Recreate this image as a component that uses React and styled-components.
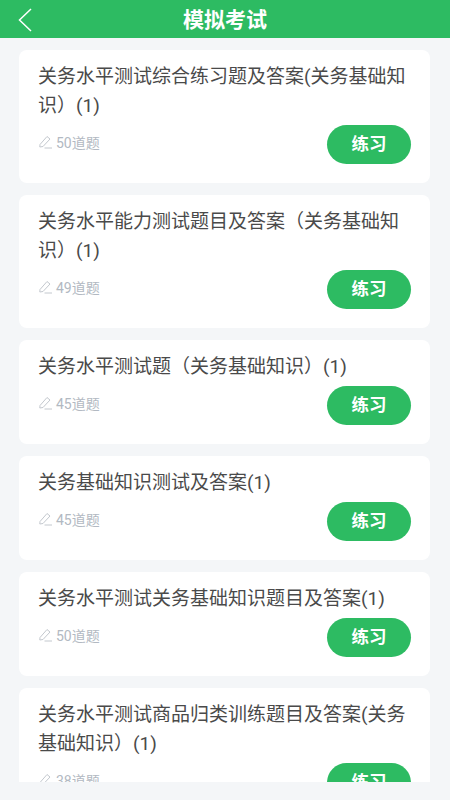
import React from 'react';
import styled, { createGlobalStyle } from 'styled-components';

const GlobalStyle = createGlobalStyle`
  html, body {
    margin: 0;
    padding: 0;
    background: #f4f6f8;
  }
  * {
    box-sizing: border-box;
  }
`;

const Page = styled.div`
  width: 450px;
  height: 800px;
  display: flex;
  flex-direction: column;
  overflow: hidden;
  background: #f4f6f8;
  font-family: "Roboto", "Noto Sans CJK SC", sans-serif;
`;

const Header = styled.header`
  height: 38px;
  flex: none;
  display: flex;
  align-items: center;
  justify-content: center;
  position: relative;
  padding-bottom: 2px;
  background: #2dbb62;
`;

const BackButton = styled.button`
  position: absolute;
  left: 17px;
  top: 8px;
  padding: 0;
  border: 0;
  background: none;
  display: flex;
`;

const HeaderTitle = styled.h1`
  margin: 0;
  color: #fff;
  font-size: 21px;
  font-weight: 700;
`;

const List = styled.div`
  height: 744px;
  flex: none;
  overflow: hidden;
  padding: 12px 20px 0 19px;
  display: flex;
  flex-direction: column;
  gap: 12px;
`;

const Card = styled.div`
  flex: none;
  padding: 12px 19px 19px 20px;
  border-radius: 8px;
  background: #fff;
`;

const Title = styled.div`
  margin-left: -1px;
  color: #4a4a4a;
  font-size: 19px;
  line-height: 29px;
`;

const Footer = styled.div`
  margin-top: 5px;
  display: flex;
  align-items: center;
  justify-content: space-between;
`;

const Count = styled.div`
  margin-bottom: 5px;
  display: flex;
  align-items: center;
  gap: 4px;
  color: #b2b9c2;
  font-size: 14px;
`;

const PracticeButton = styled.button`
  width: 84px;
  height: 39px;
  padding: 0 0 4px;
  border: 0;
  border-radius: 20px;
  background: #2dbb62;
  color: #fff;
  font-family: inherit;
  font-size: 17.5px;
  font-weight: 700;
`;

const exams = [
  { title: '关务水平测试综合练习题及答案(关务基础知识）(1)', count: 50 },
  { title: '关务水平能力测试题目及答案（关务基础知识）(1)', count: 49 },
  { title: '关务水平测试题（关务基础知识）(1)', count: 45 },
  { title: '关务基础知识测试及答案(1)', count: 45 },
  { title: '关务水平测试关务基础知识题目及答案(1)', count: 50 },
  { title: '关务水平测试商品归类训练题目及答案(关务基础知识）(1)', count: 38 },
];

const PenIcon = () => (
  <svg width="13" height="14" viewBox="0 0 13 14" fill="none" stroke="#c3c8ce" strokeWidth="1">
    <path d="M1 9.5 L8 1.5 L11 4 L4 11.5 L0.8 12 Z" strokeLinejoin="round" />
    <path d="M5.5 13 H13" />
  </svg>
);

const App = () => {
  return (
    <Page>
      <GlobalStyle />
      <Header>
        <BackButton aria-label="返回">
          <svg width="16" height="24" viewBox="0 0 16 24" fill="none" stroke="#fff" strokeWidth="1.5">
            <path d="M14 1 L2.5 12 L14 23" />
          </svg>
        </BackButton>
        <HeaderTitle>模拟考试</HeaderTitle>
      </Header>
      <List>
        {exams.map((exam) => (
          <Card key={exam.title}>
            <Title>{exam.title}</Title>
            <Footer>
              <Count>
                <PenIcon />
                {exam.count}道题
              </Count>
              <PracticeButton>练习</PracticeButton>
            </Footer>
          </Card>
        ))}
      </List>
    </Page>
  );
};

export default App;
